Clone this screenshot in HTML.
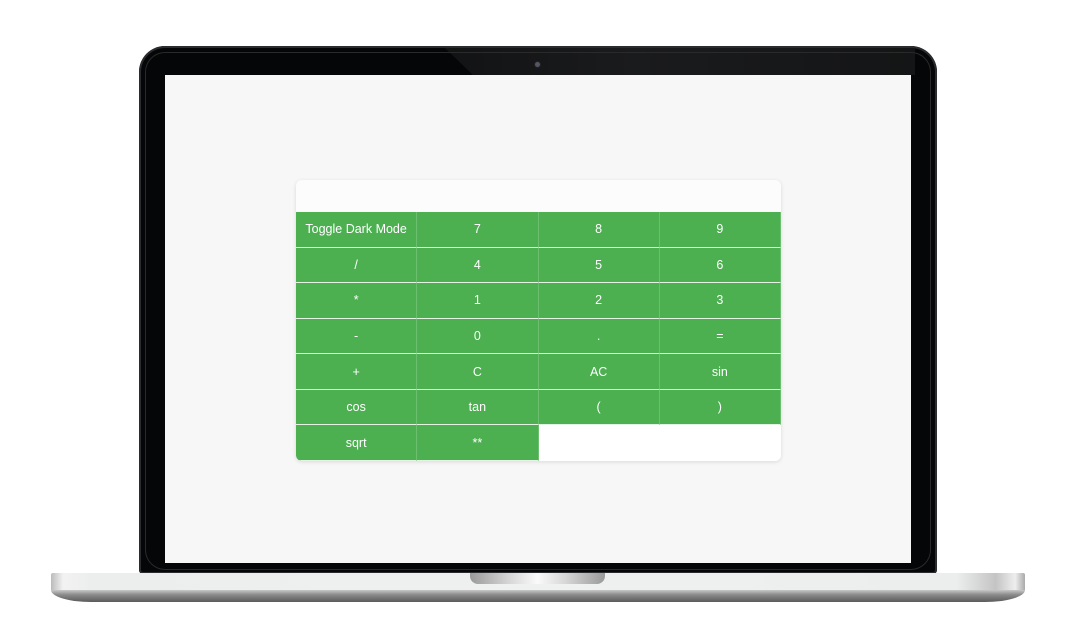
<!DOCTYPE html>
<html><head><style>
html,body{margin:0;padding:0;background:#fff;width:1067px;height:638px;overflow:hidden;position:relative;font-family:"Liberation Sans",Arial,sans-serif}
.bezel{position:absolute;left:139px;top:46px;width:798px;height:528px;background:#050607;border-radius:26px 26px 4px 4px;box-shadow:inset 0 0 0 2px #2a2c2f;overflow:hidden}
.notchshade{position:absolute;left:306px;top:2px;width:470px;height:27px;background:linear-gradient(90deg,#121314,#1a1b1d 40%,#141516);clip-path:polygon(0 0,100% 0,100% 100%,28px 100%)}
.inner{position:absolute;left:145px;top:52px;width:786px;height:518px;border-radius:20px;box-shadow:inset 0 0 0 1px #2a2a2a}
.cam{position:absolute;left:535px;top:62px;width:5px;height:5px;border-radius:50%;background:#556;box-shadow:0 0 0 1px #222}
.screen{position:absolute;left:165px;top:75px;width:746px;height:488px;background:#f7f7f7}
.base{position:absolute;left:51px;top:573px;width:974px;height:17px;background:linear-gradient(90deg,#bbb 0,#f2f2f2 12px,#eceeee 40px,#eff0f0 50%,#eceeee 93%,#c4c4c4 97%,#eee 99%,#aaa 100%);border-radius:2px 2px 0 0}
.base2{position:absolute;left:51px;top:590px;width:974px;height:12px;background:linear-gradient(#c8c8c8,#8a8a8a 40%,#5a5a5a);border-radius:0 0 40px 40px/0 0 12px 12px}
.notch{position:absolute;left:470px;top:573px;width:135px;height:11px;border-radius:0 0 8px 8px;background:linear-gradient(90deg,#9a9a9a,#d8d8d8 30%,#fafafa 50%,#d8d8d8 70%,#9a9a9a)}
.card{position:absolute;left:296px;top:180px;width:485px;height:281px;background:#fcfcfc;border-radius:6px;box-shadow:0 1px 4px rgba(0,0,0,.12);overflow:hidden}
.grid{position:absolute;left:0;top:32px;width:485px}
.row{display:flex;height:35.57px}
.c{width:121.25px;box-sizing:border-box;background:#4caf50;color:#fff;font-size:12.5px;display:flex;align-items:center;justify-content:center;border-right:1px solid #6cbf6f;border-bottom:1px solid #e4f2e4}
.c.w{background:#fff;border:none}
</style></head><body>
<div class="bezel"><div class="notchshade"></div></div><div class="inner"></div><div class="cam"></div>
<div class="screen"></div>
<div class="base"></div><div class="base2"></div><div class="notch"></div>
<div class="card"><div class="grid">
<div class="row"><div class="c">Toggle Dark Mode</div><div class="c">7</div><div class="c">8</div><div class="c">9</div></div>
<div class="row"><div class="c">/</div><div class="c">4</div><div class="c">5</div><div class="c">6</div></div>
<div class="row"><div class="c">*</div><div class="c">1</div><div class="c">2</div><div class="c">3</div></div>
<div class="row"><div class="c">-</div><div class="c">0</div><div class="c">.</div><div class="c">=</div></div>
<div class="row"><div class="c">+</div><div class="c">C</div><div class="c">AC</div><div class="c">sin</div></div>
<div class="row"><div class="c">cos</div><div class="c">tan</div><div class="c">(</div><div class="c">)</div></div>
<div class="row"><div class="c">sqrt</div><div class="c">**</div><div class="c w"></div><div class="c w"></div></div>
</div></div>
</body></html>
